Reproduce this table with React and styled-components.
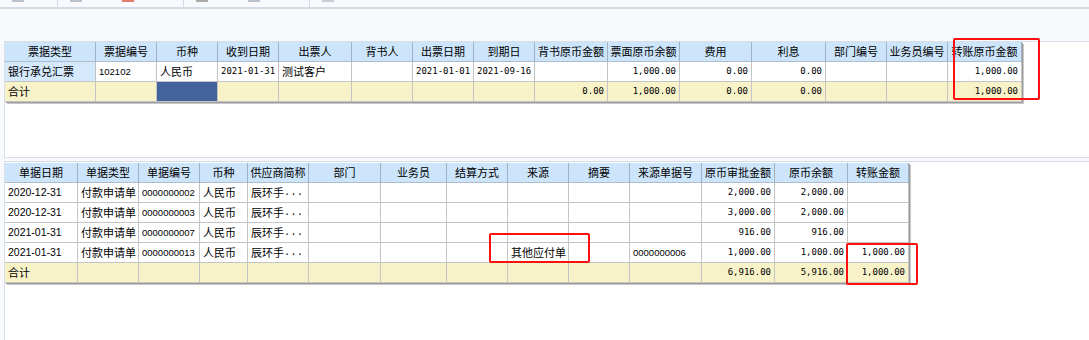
import React from "react";
import styled, { createGlobalStyle, css } from "styled-components";

const GlobalStyle = createGlobalStyle`
  html, body {
    margin: 0;
    padding: 0;
    background: #f7f9fc;
  }
  body {
    font-family: "Noto Sans CJK SC", "Liberation Sans", sans-serif;
    color: #000;
  }
`;

const Page = styled.div`
  position: relative;
  width: 1089px;
  height: 340px;
  overflow: hidden;
  display: flex;
  flex-direction: column;
`;

const Toolbar = styled.div`
  display: flex;
  height: 7px;
  border-bottom: 2px solid #d3dce6;
`;

const ToolGroup = styled.div`
  display: flex;
  gap: 40px;
  width: ${(props) => props.$w}px;
  padding-left: 12px;
  box-sizing: border-box;
  border-right: ${(props) => (props.$last ? "none" : "1px solid #d4dae2")};
`;

const ToolStub = styled.div`
  width: 12px;
  height: 2px;
  background: ${(props) => props.$color || "#b8c2cc"};
`;

const TopPanel = styled.div`
  margin: 32px 0 0 4px;
  height: 117px;
  box-sizing: border-box;
  background: #fff;
  border: 1px solid #d8dfe7;
  border-right: none;
`;

const BottomPanel = styled.div`
  flex: 1;
  margin: 3px 0 0 4px;
  padding-top: 1px;
  background: #fff;
  border-top: 1px solid #d3dbe4;
  border-left: 1px solid #d8dfe7;
`;

const Grid = styled.div`
  display: grid;
  grid-template-columns: ${(props) => props.$cols};
  width: max-content;
  box-shadow: 1px 1px 0 #9c9c9c, 2px 2px 0 #c8c8c8;
`;

const tones = {
  head: "#cde5fb",
  rowhead: "#d5e9fc",
  body: "#ffffff",
  total: "#f8f2c9",
  selected: "#43639c",
};

const Cell = styled.div`
  height: 20px;
  box-sizing: border-box;
  padding: 0 3px;
  display: flex;
  align-items: center;
  justify-content: ${(props) =>
    props.$align === "right" ? "flex-end" : props.$align === "center" ? "center" : "flex-start"};
  white-space: nowrap;
  overflow: hidden;
  font-size: 11px;
  line-height: 1;
  background: ${(props) => tones[props.$tone]};
  border-right: 1px solid #c4c4c4;
  border-bottom: 1px solid #c4c4c4;

  ${(props) =>
    props.$tone === "head" &&
    css`
      border-right: 1px solid #9fb1c2;
      border-bottom: 1px solid #aebccb;
    `}

  ${(props) =>
    props.$font === "mono" &&
    css`
      font-family: "DejaVu Sans Mono", "Liberation Mono", monospace;
      font-size: 9px;
    `}

  ${(props) =>
    props.$font === "sans" &&
    css`
      font-family: "Liberation Sans", sans-serif;
      font-size: 10.5px;
    `}

  ${(props) =>
    props.$font === "code" &&
    css`
      font-family: "Liberation Sans", sans-serif;
      font-size: 9.5px;
    `}
`;

const Dots = styled.span`
  font-family: "Liberation Mono", monospace;
  font-size: 10px;
  letter-spacing: 0.5px;
`;

const Mark = styled.div`
  position: absolute;
  left: ${(props) => props.$x}px;
  top: ${(props) => props.$y}px;
  width: ${(props) => props.$w}px;
  height: ${(props) => props.$h}px;
  box-sizing: border-box;
  border: 2px solid #ff1010;
  border-radius: 2px;
  pointer-events: none;
`;

// kind: text | amount | date | sdate | code
const topColumns = [
  ["票据类型", 91, "text"],
  ["票据编号", 61, "code"],
  ["币种", 61, "text"],
  ["收到日期", 61, "date"],
  ["出票人", 73, "text"],
  ["背书人", 61, "text"],
  ["出票日期", 61, "date"],
  ["到期日", 61, "date"],
  ["背书原币金额", 73, "amount"],
  ["票面原币余额", 72, "amount"],
  ["费用", 72, "amount"],
  ["利息", 74, "amount"],
  ["部门编号", 61, "text"],
  ["业务员编号", 61, "text"],
  ["转账原币金额", 74, "amount"],
];

const topRows = [
  ["银行承兑汇票", "102102", "人民币", "2021-01-31", "测试客户", "", "2021-01-01", "2021-09-16", "", "1,000.00", "0.00", "0.00", "", "", "1,000.00"],
];

const topTotal = ["合计", "", "", "", "", "", "", "", "0.00", "1,000.00", "0.00", "0.00", "", "", "1,000.00"];

const bottomColumns = [
  ["单据日期", 73, "sdate"],
  ["单据类型", 61, "text"],
  ["单据编号", 61, "code"],
  ["币种", 48, "text"],
  ["供应商简称", 61, "text"],
  ["部门", 72, "text"],
  ["业务员", 66, "text"],
  ["结算方式", 61, "text"],
  ["来源", 61, "text"],
  ["摘要", 61, "text"],
  ["来源单据号", 72, "code"],
  ["原币审批金额", 73, "amount"],
  ["原币余额", 73, "amount"],
  ["转账金额", 61, "amount"],
];

const supplier = "辰环手...";

const bottomRows = [
  ["2020-12-31", "付款申请单", "0000000002", "人民币", supplier, "", "", "", "", "", "", "2,000.00", "2,000.00", ""],
  ["2020-12-31", "付款申请单", "0000000003", "人民币", supplier, "", "", "", "", "", "", "3,000.00", "2,000.00", ""],
  ["2021-01-31", "付款申请单", "0000000007", "人民币", supplier, "", "", "", "", "", "", "916.00", "916.00", ""],
  ["2021-01-31", "付款申请单", "0000000013", "人民币", supplier, "", "", "", "其他应付单", "", "0000000006", "1,000.00", "1,000.00", "1,000.00"],
];

const bottomTotal = ["合计", "", "", "", "", "", "", "", "", "", "", "6,916.00", "5,916.00", "1,000.00"];

const fontFor = (kind) => {
  if (kind === "amount" || kind === "date") return "mono";
  if (kind === "sdate") return "sans";
  if (kind === "code") return "code";
  return undefined;
};

const renderValue = (value) => {
  if (value.endsWith("...")) {
    return (
      <>
        {value.slice(0, -3)}
        <Dots>...</Dots>
      </>
    );
  }
  return value;
};

const DataGrid = ({ columns, rows, total, rowHeadFirst, selectedTotal }) => {
  const cols = columns.map((c) => `${c[1]}px`).join(" ");
  return (
    <Grid $cols={cols}>
      {columns.map(([title]) => (
        <Cell key={title} $tone="head" $align="center">
          {title}
        </Cell>
      ))}
      {rows.map((row, r) =>
        row.map((value, i) => {
          const kind = columns[i][2];
          return (
            <Cell
              key={`${r}-${i}`}
              $tone={rowHeadFirst && i === 0 ? "rowhead" : "body"}
              $align={kind === "amount" ? "right" : "left"}
              $font={fontFor(kind)}
            >
              {renderValue(value)}
            </Cell>
          );
        })
      )}
      {total.map((value, i) => (
        <Cell
          key={`t-${i}`}
          $tone={selectedTotal === i ? "selected" : "total"}
          $align={columns[i][2] === "amount" ? "right" : "left"}
          $font={columns[i][2] === "amount" ? "mono" : undefined}
        >
          {value}
        </Cell>
      ))}
    </Grid>
  );
};

const App = () => {
  return (
    <Page>
      <GlobalStyle />
      <Toolbar>
        <ToolGroup $w={58}>
          <ToolStub />
        </ToolGroup>
        <ToolGroup $w={126}>
          <ToolStub />
          <ToolStub $color="#e07a6a" />
        </ToolGroup>
        <ToolGroup $w={126}>
          <ToolStub $color="#a9a9a9" />
          <ToolStub />
        </ToolGroup>
        <ToolGroup $w={120} $last>
          <ToolStub $color="#c9ced4" />
        </ToolGroup>
      </Toolbar>

      <TopPanel>
        <DataGrid
          columns={topColumns}
          rows={topRows}
          total={topTotal}
          rowHeadFirst
          selectedTotal={2}
        />
      </TopPanel>

      <BottomPanel>
        <DataGrid columns={bottomColumns} rows={bottomRows} total={bottomTotal} />
      </BottomPanel>

      <Mark $x={953} $y={38} $w={87} $h={62} />
      <Mark $x={489} $y={233} $w={101} $h={30} />
      <Mark $x={846} $y={243} $w={72} $h={42} />
    </Page>
  );
};

export default App;
